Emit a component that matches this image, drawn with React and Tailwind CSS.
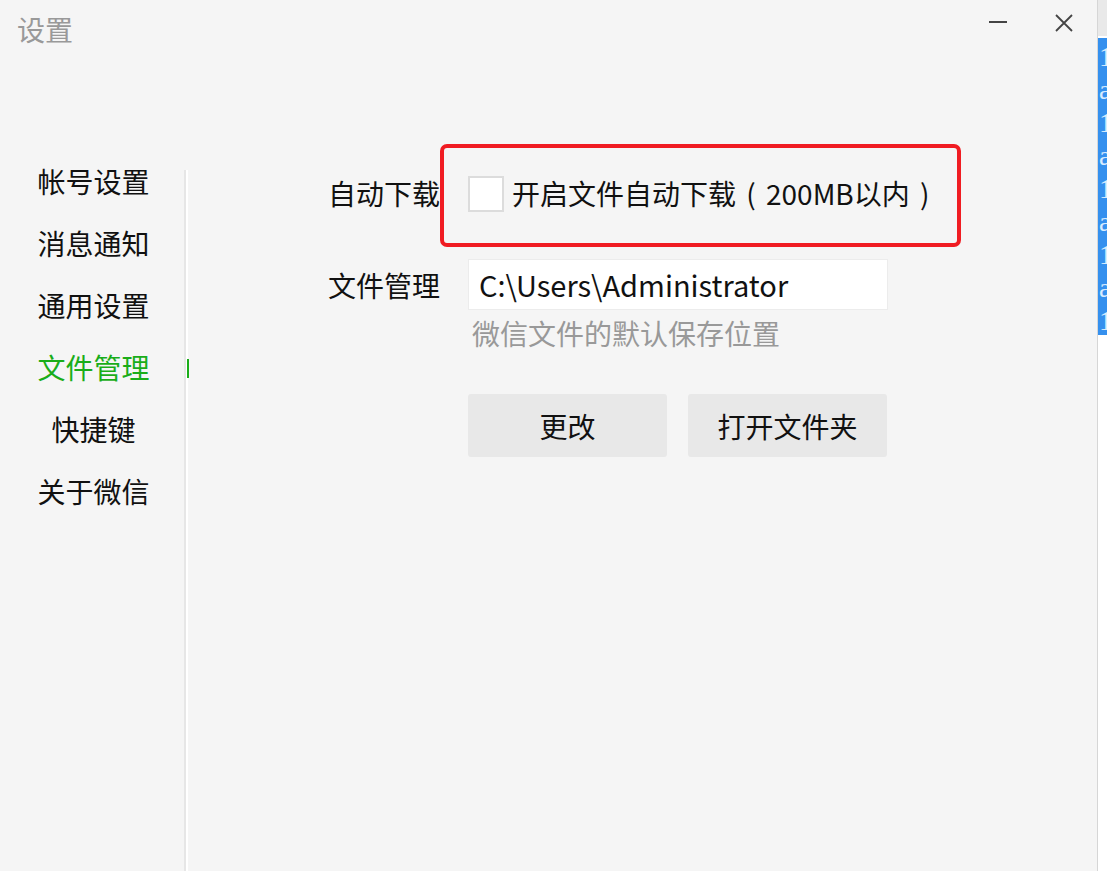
import React from "react";

const font = { fontFamily: '"Noto Sans CJK SC", "Noto Sans", sans-serif' };

function Sidebar() {
  const items = ["帐号设置", "消息通知", "通用设置", "文件管理", "快捷键", "关于微信"];
  return (
    <div className="w-[184px] shrink-0 pt-[90px] flex flex-col">
      {items.map((t) => (
        <div
          key={t}
          className={
            "h-[62px] flex items-center justify-center text-[28px] leading-none relative pl-[3px] " +
            (t === "文件管理" ? "text-[#1aad19]" : "text-[#111]")
          }
        >
          <span>{t}</span>
          {t === "文件管理" && (
            <div className="absolute right-[-5px] top-[23px] w-[2px] h-[19px] bg-[#1aad19]" />
          )}
        </div>
      ))}
    </div>
  );
}

function Content() {
  return (
    <div className="flex-1 pl-[139px] pt-[116px] relative">
      {/* row 1 */}
      <div className="flex items-center h-[36px]">
        <div className="w-[113px] text-right text-[28px] leading-none text-[#111] -mt-[2px]">自动下载</div>
        <div className="ml-[28px] w-[36px] h-[36px] bg-white border-2 border-[#dcdcdc]" />
        <div className="ml-[8px] text-[28px] leading-none text-[#111] whitespace-nowrap flex items-center -mt-[2px]">
          <span>开启文件自动下载</span>
          <span className="inline-block w-[30px] text-center">(</span>
          <span>200MB以内</span>
          <span className="inline-block w-[30px] text-center">)</span>
        </div>
      </div>
      {/* red annotation */}
      <div className="absolute left-[252px] top-[84px] w-[521px] h-[103px] border-4 border-[#f01c22] rounded-[7px]" />
      {/* row 2 */}
      <div className="flex items-center mt-[47px]">
        <div className="w-[113px] text-right text-[28px] leading-none text-[#111]">文件管理</div>
        <div className="ml-[28px] w-[420px] h-[51px] bg-white border border-[#ececec] flex items-center pl-[10px] text-[29px] leading-none text-[#111]">
          C:\Users\Administrator
        </div>
      </div>
      <div className="ml-[145px] mt-[5px] text-[28px] leading-[36px] text-[#999]">
        微信文件的默认保存位置
      </div>
      <div className="ml-[141px] mt-[43px] flex gap-[21px]">
        <button className="w-[199px] h-[63px] bg-[#e8e8e8] rounded-[3px] text-[28px] leading-none text-[#111]">
          更改
        </button>
        <button className="w-[199px] h-[63px] bg-[#e8e8e8] rounded-[3px] text-[28px] leading-none text-[#111]">
          打开文件夹
        </button>
      </div>
    </div>
  );
}

function Strip() {
  const lines = ["1", "a", "1", "a", "1", "a", "1", "a", "1"];
  return (
    <div className="w-[10px] shrink-0 flex flex-col border-l border-[#d6d6d6] overflow-hidden">
      <div className="h-[36px] bg-[#e9e9e9]" />
      <div className="h-[2px] bg-white" />
      <div className="h-[297px] bg-[#3590ee] overflow-hidden pt-[2px]">
        {lines.map((c, i) => (
          <div
            key={i}
            className="h-[33px] text-[28px] leading-[33px] text-[#d8ecff] pl-[1px]"
            style={{ fontFamily: '"Liberation Serif", serif' }}
          >
            {c}
          </div>
        ))}
      </div>
      <div className="flex-1 bg-white" />
    </div>
  );
}

export default function App() {
  return (
    <div className="w-[1107px] h-[871px] bg-[#f5f5f5] flex overflow-hidden" style={font}>
      <div className="flex-1 flex flex-col">
        <div className="h-[60px] shrink-0 flex items-start relative">
          <div className="ml-[17px] mt-[13px] text-[28px] leading-[32px] text-[#999]">设置</div>
          <div className="absolute left-[989px] top-[21px] w-[18px] h-[2px] bg-[#444]" />
          <svg className="absolute left-[1054px] top-[13px]" width="20" height="20" viewBox="0 0 20 20">
            <path d="M2 2 L18 18 M18 2 L2 18" stroke="#444" strokeWidth="1.8" />
          </svg>
        </div>
        <div className="flex-1 flex">
          <Sidebar />
          <div className="mt-[110px] w-[2px] bg-[#e6e6e6]" />
          <div className="mt-[110px] w-[2px] bg-white" />
          <Content />
        </div>
      </div>
      <Strip />
    </div>
  );
}
